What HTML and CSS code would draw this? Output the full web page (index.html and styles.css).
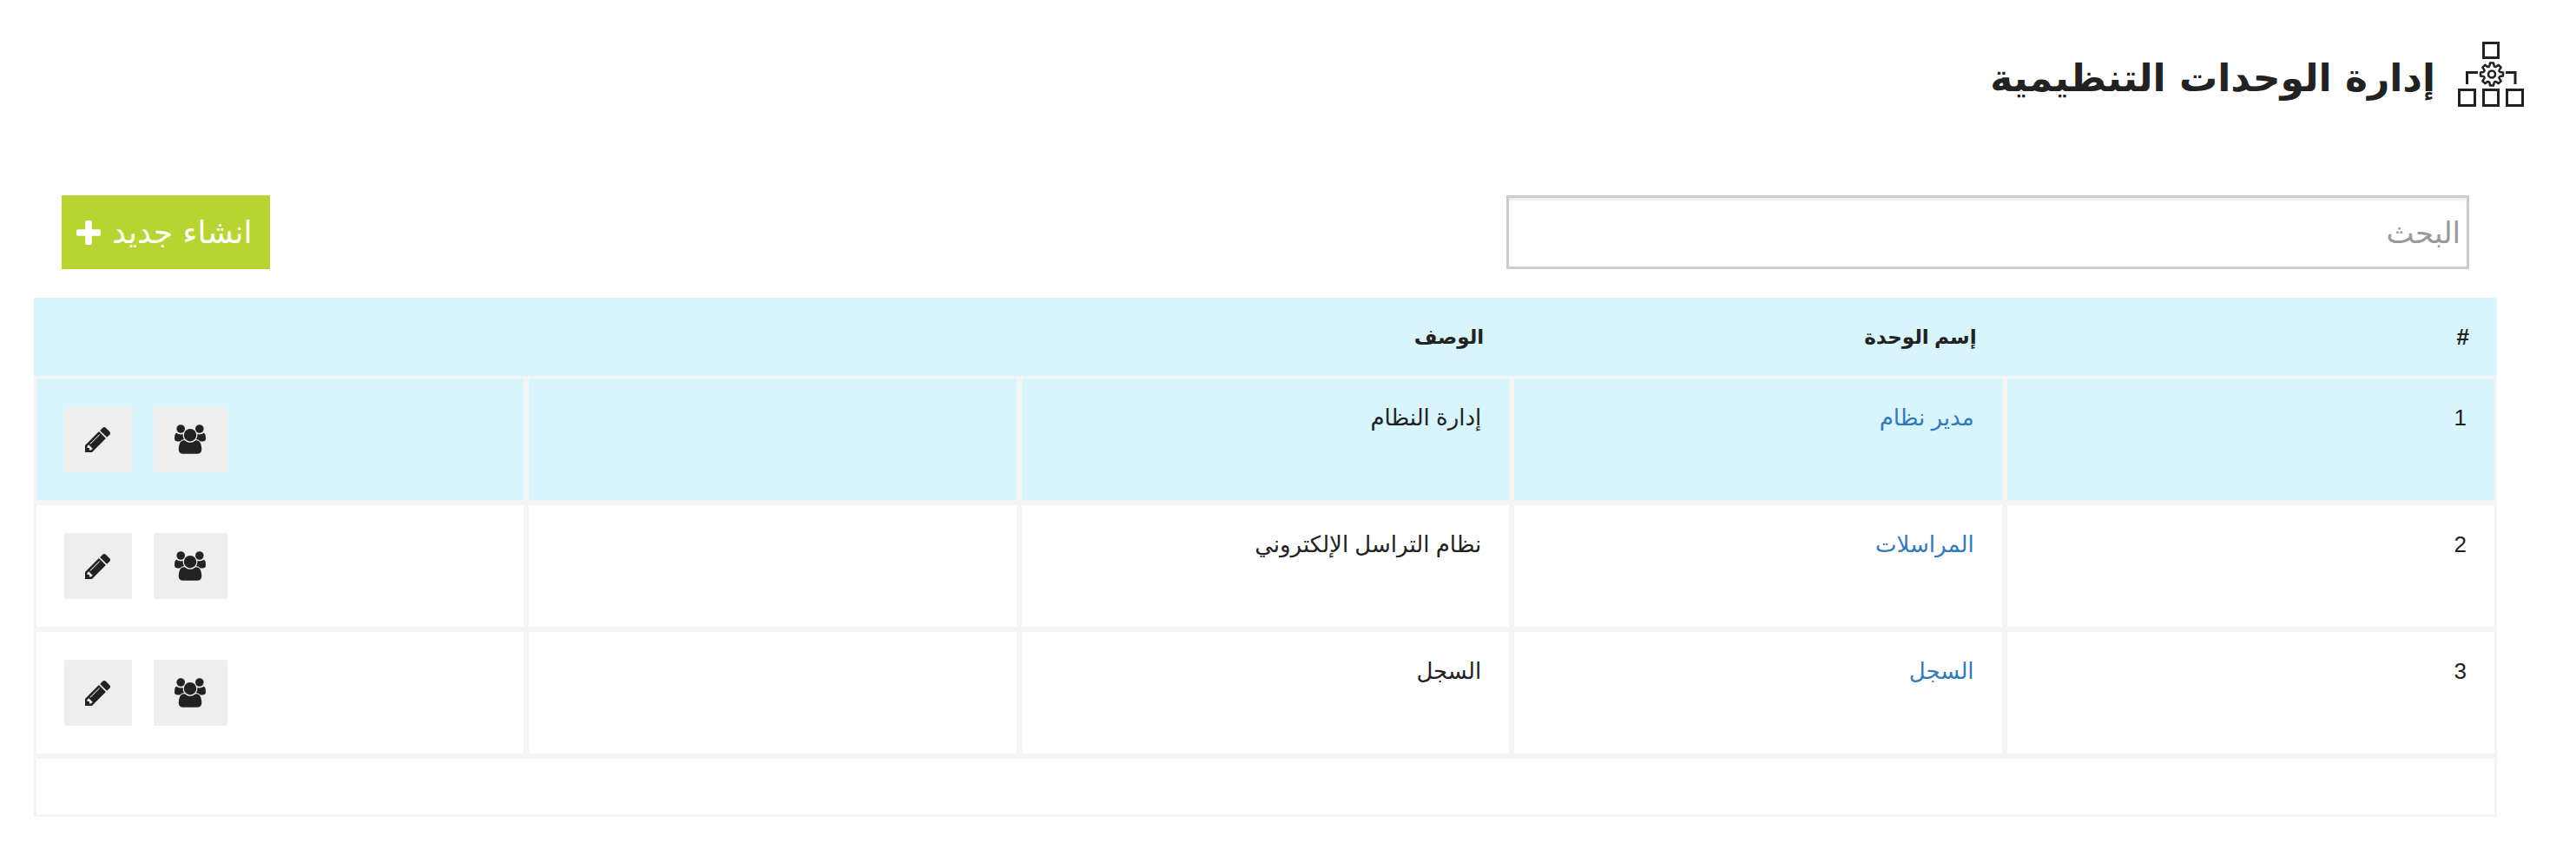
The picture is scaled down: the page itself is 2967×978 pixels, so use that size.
FILE: index.html
```html
<!DOCTYPE html>
<html lang="ar" dir="rtl">
<head>
<meta charset="utf-8">
<title>إدارة الوحدات التنظيمية</title>
<link rel="stylesheet" href="styles.css">
</head>
<body>
<svg class="symbols" aria-hidden="true">
  <symbol id="pencil" viewBox="128 149 1515 1515"><path d="M491 1536l91-91-235-235-91 91v107h128v128h107zM1014 608q0-22-22-22-10 0-17 7l-542 542q-7 7-7 17 0 22 22 22 10 0 17-7l542-542q7-7 7-17zM960 416l416 416-832 832h-416v-416zM1643 512q0 53-37 90l-166 166-416-416 166-165q36-38 90-38 53 0 91 38l235 234q37 39 37 91z"/></symbol>
  <symbol id="group" viewBox="0 0 1920 1792"><path d="M593 896q-162 5-265 128h-134q-82 0-138-40.500t-56-118.500q0-353 124-353 6 0 43.500 21t97.500 42.500 119 21.500q67 0 133-23-5 37-5 66 0 139 81 256zm1071 637q0 120-73 189.500t-194 69.500h-874q-121 0-194-69.500t-73-189.500q0-53 3.500-103.500t14-109 26.500-108.500 43-97.500 62-81 85.500-53.500 111.500-20q10 0 43 21.500t73 48 107 48 135 21.500 135-21.500 107-48 73-48 43-21.500q61 0 111.500 20t85.500 53.500 62 81 43 97.500 26.500 108.500 14 109 3.500 103.500zm-1024-1277q0 106-75 181t-181 75-181-75-75-181 75-181 181-75 181 75 75 181zm704 384q0 159-112.500 271.500t-271.500 112.500-271.500-112.500-112.500-271.500 112.500-271.500 271.500-112.500 271.500 112.500 112.500 271.500zm576 225q0 78-56 118.500t-138 40.500h-134q-103-123-265-128 81-117 81-256 0-29-5-66 66 23 133 23 59 0 119-21.500t97.500-42.500 43.500-21q124 0 124 353zm-128-609q0 106-75 181t-181 75-181-75-75-181 75-181 181-75 181 75 75 181z"/></symbol>
</svg>

<header class="page-header">
  <svg class="page-icon" viewBox="0 0 76 75" aria-hidden="true">
    <g fill="none" stroke="#222" stroke-width="3">
      <path d="M29.500 1.500h17v17h-17zM1.500 55.500h18v18h-18zM29.500 55.500h17v18h-17zM56.500 55.500h18v18h-18z"/>
      <path d="M23 35.500H10.500v13.500M55 35.500h11v13.500"/>
      <g transform="translate(39 37.500)" stroke-width="2.500" stroke-linejoin="round">
        <circle r="4"/>
        <path d="M-2-13H2L2.600-9.600Q3.500-8 4.900-8.600L7.800-10.600L10.600-7.800L8.600-4.900Q8-3.500 9.600-2.600L13-2V2L9.600 2.600Q8 3.500 8.600 4.900L10.600 7.800L7.800 10.600L4.900 8.600Q3.500 8 2.600 9.600L2 13H-2L-2.600 9.600Q-3.500 8-4.900 8.600L-7.800 10.600L-10.600 7.800L-8.600 4.900Q-8 3.500-9.600 2.600L-13 2V-2L-9.600-2.600Q-8-3.500-8.600-4.900L-10.600-7.800L-7.800-10.600L-4.900-8.600Q-3.500-8-2.600-9.600Z"/>
      </g>
    </g>
  </svg>
  <h1 class="page-title">إدارة الوحدات التنظيمية</h1>
</header>

<main class="units">
  <div class="toolbar">
    <input class="search" type="text" placeholder="البحث" aria-label="البحث">
    <button class="create" type="button">انشاء جديد
      <svg class="create-icon" viewBox="192 128 1408 1408" aria-hidden="true"><path d="M1600 736v192q0 40-28 68t-68 28h-416v416q0 40-28 68t-68 28h-192q-40 0-68-28t-28-68v-416h-416q-40 0-68-28t-28-68v-192q0-40 28-68t68-28h416v-416q0-40 28-68t68-28h192q40 0 68 28t28 68v416h416q40 0 68 28t28 68z"/></svg>
    </button>
  </div>

  <table class="grid">
    <thead>
      <tr><th class="number">#</th><th>إسم الوحدة</th><th>الوصف</th><th></th><th></th></tr>
    </thead>
    <tbody>
      <tr class="selected">
        <td>1</td><td><a href="#">مدير نظام</a></td><td>إدارة النظام</td><td></td>
        <td><div class="actions">
          <button class="action" type="button" aria-label="الأعضاء"><svg class="icon-group"><use href="#group"/></svg></button>
          <button class="action" type="button" aria-label="تعديل"><svg class="icon-pencil"><use href="#pencil"/></svg></button>
        </div></td>
      </tr>
      <tr>
        <td>2</td><td><a href="#">المراسلات</a></td><td>نظام التراسل الإلكتروني</td><td></td>
        <td><div class="actions">
          <button class="action" type="button" aria-label="الأعضاء"><svg class="icon-group"><use href="#group"/></svg></button>
          <button class="action" type="button" aria-label="تعديل"><svg class="icon-pencil"><use href="#pencil"/></svg></button>
        </div></td>
      </tr>
      <tr>
        <td>3</td><td><a href="#">السجل</a></td><td>السجل</td><td></td>
        <td><div class="actions">
          <button class="action" type="button" aria-label="الأعضاء"><svg class="icon-group"><use href="#group"/></svg></button>
          <button class="action" type="button" aria-label="تعديل"><svg class="icon-pencil"><use href="#pencil"/></svg></button>
        </div></td>
      </tr>
    </tbody>
    <tfoot>
      <tr><td colspan="5"></td></tr>
    </tfoot>
  </table>
</main>
</body>
</html>
```

FILE: styles.css
```css
* { box-sizing: border-box; }

body {
  margin: 0;
  background: #fff;
  color: #222;
  font-family: "Liberation Sans", "DejaVu Sans", sans-serif;
  font-size: 26px;
  line-height: 26px;
}

.symbols { display: none; }

.page-header {
  display: flex;
  gap: 26px;
  padding: 48px 60px 0;
}

.page-icon { width: 76px; height: 75px; }

.page-title {
  margin: 0;
  padding-top: 12px;
  font-family: "DejaVu Sans", sans-serif;
  font-size: 44px;
  font-weight: bold;
  line-height: 60px;
}

.units { margin: 102px 91px 37px 39px; }

.toolbar {
  display: flex;
  justify-content: space-between;
  padding: 0 32px;
  margin-bottom: 33px;
}

.search {
  width: 40%;
  height: 85px;
  padding: 0 7px;
  border: 3px solid #ccc;
  background: #fff;
  box-shadow: inset 0 3px 3px rgba(0, 0, 0, 0.075);
  color: #222;
  font-family: "DejaVu Sans", sans-serif;
  font-size: 34px;
}

.search::placeholder { color: #999; opacity: 1; }

.create {
  display: flex;
  align-items: center;
  gap: 13px;
  height: 85px;
  padding: 0 20px 0 17px;
  border: 0;
  background: #b8d432;
  color: #fff;
  font-family: "DejaVu Sans", sans-serif;
  font-size: 36px;
}

.create-icon { width: 28px; height: 28px; fill: currentColor; }

.grid {
  width: 100%;
  table-layout: fixed;
  border-collapse: separate;
  border-spacing: 0;
}

.grid th {
  height: 90px;
  padding: 0 32px;
  background: #d8f4fd;
  font-size: 23px;
  text-align: right;
  vertical-align: middle;
}

.grid .number { font-size: 26px; }

.grid td {
  height: 146px;
  padding: 32px;
  border: 3px solid #f4f4f4;
  text-align: right;
  vertical-align: top;
}

.grid .selected td { background: #d8f4fd; }

.grid tfoot td { height: 70px; padding: 0; }

.grid a { color: #337ab7; text-decoration: none; }

.actions {
  display: flex;
  justify-content: flex-end;
  gap: 25px;
}

.action {
  display: flex;
  align-items: center;
  height: 76px;
  padding: 0 25px 0 24px;
  border: 0;
  border-radius: 2px;
  background: #eee;
}

.action svg { fill: #222; }

.icon-group { width: 36px; height: 34px; }

.icon-pencil { width: 29px; height: 29px; }
```
